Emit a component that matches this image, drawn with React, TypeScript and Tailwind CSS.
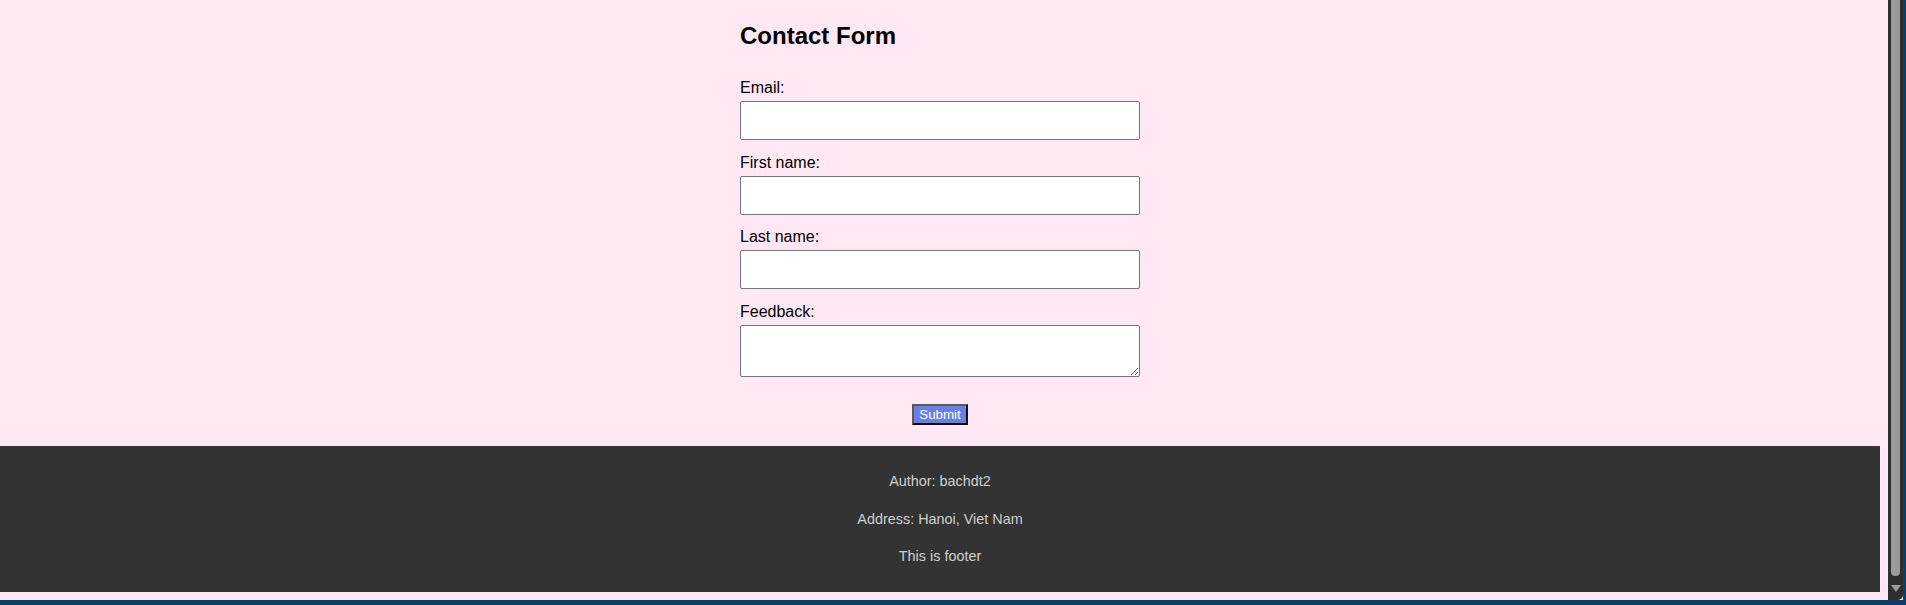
const fields = [
  { id: "email", label: "Email:", type: "input" },
  { id: "firstName", label: "First name:", type: "input" },
  { id: "lastName", label: "Last name:", type: "input" },
  { id: "feedback", label: "Feedback:", type: "textarea" },
];

function ContactForm() {
  return (
    <div className="w-[400px] pt-[22px]">
      <h2 className="text-[24px] leading-[28px] font-bold text-black">Contact Form</h2>
      <form className="mt-[29px] flex flex-col gap-[13.7px]" onSubmit={(e) => e.preventDefault()}>
        {fields.map((f) => (
          <div key={f.id} className="flex flex-col">
            <label htmlFor={f.id} className="text-[16px] leading-[18px] text-black">
              {f.label}
            </label>
            {f.type === "textarea" ? (
              <textarea
                id={f.id}
                className="mt-[4px] h-[52px] w-[400px] rounded-[2px] border border-[#767676] bg-white"
              />
            ) : (
              <input
                id={f.id}
                type="text"
                className="mt-[4px] h-[39px] w-[400px] rounded-[2px] border border-[#767676] bg-white"
              />
            )}
          </div>
        ))}
        <div className="mt-[13.6px] flex justify-center">
          <button
            type="submit"
            className="h-[21px] w-[56px] border-2 border-t-[#5a5a5a] border-l-[#5a5a5a] border-r-[#111] border-b-[#111] bg-[#6a7fe3] text-[13.333px] leading-[15px] text-white"
          >
            Submit
          </button>
        </div>
      </form>
    </div>
  );
}

function Footer() {
  return (
    <footer className="h-[146px] bg-[#333] pt-[25px] flex flex-col items-center gap-[17.5px] text-[14.4px] leading-5 text-[#cfcfcf]">
      <p>Author: bachdt2</p>
      <p>Address: Hanoi, Viet Nam</p>
      <p>This is footer</p>
    </footer>
  );
}

function Scrollbar() {
  return (
    <div className="w-[15px] h-[600px] bg-[#2e2e2e] rounded-br-[5px] flex flex-col items-center">
      <div className="w-[9px] h-[576px] bg-[#9a9a9a] rounded-b-[4px]" />
      <svg className="mt-[9px]" width="10" height="7" viewBox="0 0 10 7">
        <path d="M0 0 H10 L5 7 Z" fill="#9a9a9a" />
      </svg>
    </div>
  );
}

export default function App() {
  return (
    <div className="w-[1906px] h-[605px] overflow-hidden bg-[#0e3f69] font-['Liberation_Sans',Arial,sans-serif]">
      <div className="h-[600px] w-[1903px] bg-[#ffe8f4] flex">
        <div className="w-[1880px] flex flex-col">
          <main className="h-[446px] flex justify-center">
            <ContactForm />
          </main>
          <Footer />
        </div>
        <div className="w-[8px]" />
        <Scrollbar />
      </div>
    </div>
  );
}
